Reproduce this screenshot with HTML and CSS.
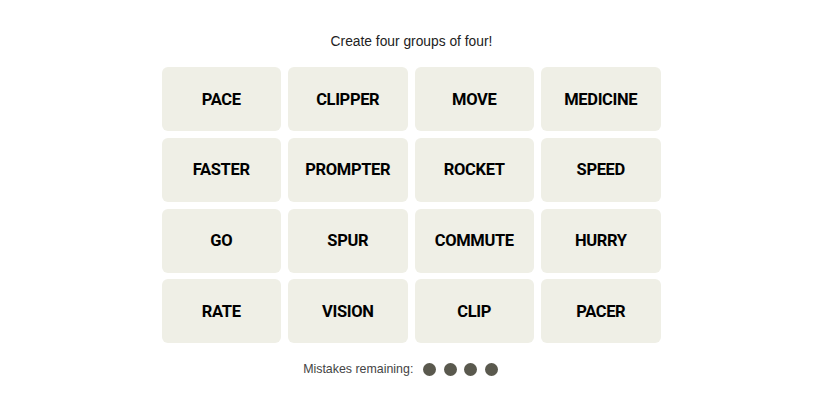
FILE: index.html
```html
<!DOCTYPE html>
<html>
<head>
<meta charset="utf-8">
<link rel="stylesheet" href="styles.css">
</head>
<body>
<main class="game">
  <p class="prompt">Create four groups of four!</p>
  <div class="board">
    <div class="tile">PACE</div>
    <div class="tile">CLIPPER</div>
    <div class="tile">MOVE</div>
    <div class="tile">MEDICINE</div>
    <div class="tile">FASTER</div>
    <div class="tile">PROMPTER</div>
    <div class="tile">ROCKET</div>
    <div class="tile">SPEED</div>
    <div class="tile">GO</div>
    <div class="tile">SPUR</div>
    <div class="tile">COMMUTE</div>
    <div class="tile">HURRY</div>
    <div class="tile">RATE</div>
    <div class="tile">VISION</div>
    <div class="tile">CLIP</div>
    <div class="tile">PACER</div>
  </div>
  <div class="mistakes">
    <span class="mistakes-label">Mistakes remaining:</span>
    <span class="dots"><i class="dot"></i><i class="dot"></i><i class="dot"></i><i class="dot"></i></span>
  </div>
</main>
</body>
</html>
```
FILE: styles.css
```css
html, body {
  margin: 0;
  padding: 0;
  background: #ffffff;
}
.game {
  display: flex;
  flex-direction: column;
  align-items: center;
  padding-top: 33px;
  font-family: "Liberation Sans", Arial, sans-serif;
}
.prompt {
  margin: 0 0 16px 0;
  font-size: 13.8px;
  color: #222;
  line-height: 18px;
  transform: translateX(-1px);
}
.board {
  display: grid;
  grid-template-columns: repeat(4, 119.5px);
  grid-auto-rows: 64px;
  column-gap: 7px;
  row-gap: 6.8px;
  width: 500px;
  transform: translateX(-1px);
}
.tile {
  background: #efefe6;
  border-radius: 6px;
  display: flex;
  align-items: center;
  justify-content: center;
  font-family: "Roboto", "Liberation Sans", sans-serif;
  font-weight: 700;
  font-size: 16.5px;
  letter-spacing: -0.35px;
  color: #000;
}
.mistakes {
  display: flex;
  align-items: center;
  margin-top: 19px;
  gap: 10px;
  transform: translateX(-12px);
}
.mistakes-label {
  font-size: 12.4px;
  color: #444;
}
.dots {
  display: flex;
  gap: 7.5px;
}
.dot {
  display: block;
  width: 13px;
  height: 13px;
  border-radius: 50%;
  background: #5a594e;
}
```
